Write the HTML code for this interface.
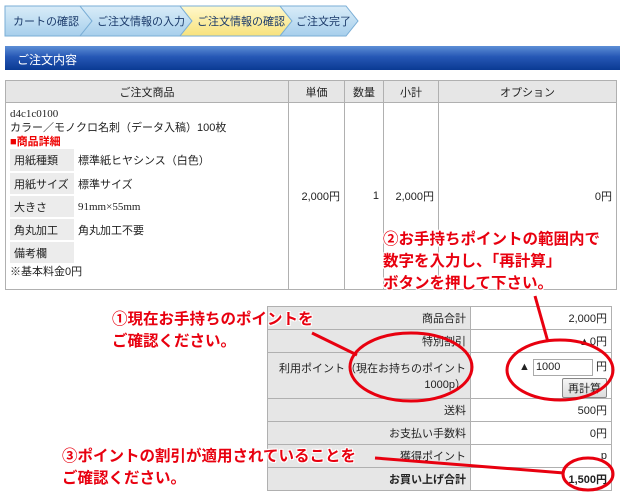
<!DOCTYPE html>
<html><head><meta charset="utf-8"><style>
*{margin:0;padding:0;box-sizing:border-box}
body{width:620px;height:497px;background:#fff;position:relative;overflow:hidden;font-family:"Liberation Sans","Noto Sans CJK JP",sans-serif;font-size:11px;color:#222}
.a{position:absolute}
.bar{left:5px;top:46px;width:615px;height:24px;background:linear-gradient(#5d8fd6,#2657b5 45%,#0a3a93);color:#fff;font-size:12px;padding:5px 0 0 12px}
table{border-collapse:collapse;position:absolute}
td,th{border:1px solid #b0b0b0;font-weight:normal}
.t1 th{background:#e6e6e6;height:22px;font-size:11px}
.det td{border:none;border-bottom:2px solid #fff;height:23px;padding:0 4px;font-size:11px}
.det td.l{background:#ececec;width:64px}
.t2 td{height:23px;padding:0 4px;text-align:right;font-size:11px}
.t2 td.l{background:#e6e6e6;width:203px}
.ann{position:absolute;color:#e8000f;font-weight:bold;font-size:15.5px;line-height:22px;text-shadow:0 0 2px #fff,0 0 2px #fff,1px 1px 0 #fff,-1px -1px 0 #fff,1px -1px 0 #fff,-1px 1px 0 #fff;white-space:nowrap}
.serif{font-family:"Liberation Serif",serif}
</style></head><body>
<svg class="a" style="left:0;top:0" width="420" height="40">
<defs><linearGradient id="gb" x1="0" y1="0" x2="0" y2="1"><stop offset="0" stop-color="#d9ecf8"/><stop offset="1" stop-color="#a7cfec"/></linearGradient>
<linearGradient id="gy" x1="0" y1="0" x2="0" y2="1"><stop offset="0" stop-color="#fff8cc"/><stop offset="1" stop-color="#f7e27c"/></linearGradient></defs>
<polygon points="5,6 80,6 92,21 80,36 5,36" fill="url(#gb)" stroke="#7aaed6"/>
<polygon points="80,6 180,6 192,21 180,36 80,36 92,21" fill="url(#gb)" stroke="#7aaed6"/>
<polygon points="180,6 280,6 292,21 280,36 180,36 192,21" fill="url(#gy)" stroke="#7aaed6"/>
<polygon points="280,6 346,6 358,21 346,36 280,36 292,21" fill="url(#gb)" stroke="#7aaed6"/>
<g font-size="11" fill="#1b3a6a" font-family="Liberation Sans,Noto Sans CJK JP,sans-serif">
<text x="13" y="25">カートの確認</text><text x="97" y="25">ご注文情報の入力</text><text x="197" y="25">ご注文情報の確認</text><text x="296" y="25">ご注文完了</text></g>
</svg>
<div class="a bar">ご注文内容</div>
<table class="t1" style="left:5px;top:80px;width:612px;height:210px">
<tr><th style="width:283px">ご注文商品</th><th style="width:56px">単価</th><th style="width:39px">数量</th><th style="width:55px">小計</th><th>オプション</th></tr>
<tr><td style="vertical-align:top;padding:4px 4px 3px">
<div class="serif" style="line-height:14px">d4c1c0100</div>
<div style="line-height:14px">カラー／モノクロ名刺（データ入稿）100枚</div>
<div style="color:#e00;font-weight:bold;line-height:14px">■商品詳細</div>
<table class="det" style="position:static;width:100%"><tr><td class="l">用紙種類</td><td>標準紙ヒヤシンス（白色）</td></tr>
<tr><td class="l">用紙サイズ</td><td>標準サイズ</td></tr><tr><td class="l">大きさ</td><td class="serif">91mm×55mm</td></tr>
<tr><td class="l">角丸加工</td><td>角丸加工不要</td></tr><tr><td class="l">備考欄</td><td></td></tr></table>
<div style="line-height:14px">※基本料金0円</div></td>
<td style="text-align:right;padding-right:4px">2,000円</td><td style="text-align:right;padding-right:4px">1</td><td style="text-align:right;padding-right:4px">2,000円</td><td style="text-align:right;padding-right:4px">0円</td></tr>
</table>
<table class="t2" style="left:267px;top:306px;width:345px">
<tr><td class="l">商品合計</td><td>2,000円</td></tr>
<tr><td class="l">特別割引</td><td>▲0円</td></tr>
<tr><td class="l" style="height:45px;vertical-align:top;padding-top:8px;line-height:16px">利用ポイント（現在お持ちのポイント<br>1000p）</td><td style="height:45px;vertical-align:top;padding-top:5px">▲ <span style="display:inline-block;width:60px;height:17px;border:1px solid #aaa;text-align:left;padding-left:2px;line-height:15px">1000</span> 円<br><span style="display:inline-block;margin-top:2px;border:1px solid #888;border-radius:2px;background:linear-gradient(#f6f6f6,#dcdcdc);padding:1px 5px">再計算</span></td></tr>
<tr><td class="l">送料</td><td>500円</td></tr>
<tr><td class="l">お支払い手数料</td><td>0円</td></tr>
<tr><td class="l">獲得ポイント</td><td>p</td></tr>
<tr><td class="l" style="font-weight:bold">お買い上げ合計</td><td style="font-weight:bold">1,500円</td></tr>
</table>
<svg class="a" style="left:0;top:0" width="620" height="497" fill="none" stroke="#e8000f" stroke-width="3">
<ellipse cx="411" cy="367" rx="61" ry="34"/>
<ellipse cx="560" cy="370" rx="53" ry="30"/>
<ellipse cx="588" cy="474" rx="25" ry="16"/>
<line x1="312" y1="333" x2="357" y2="355"/>
<line x1="535" y1="296" x2="548" y2="342"/>
<line x1="375" y1="458" x2="564" y2="473"/>
</svg>
<div class="ann" style="left:383px;top:229px">②お手持ちポイントの範囲内で<br>数字を入力し、「再計算」<br>ボタンを押して下さい。</div>
<div class="ann" style="left:112px;top:309px">①現在お手持ちのポイントを<br>ご確認ください。</div>
<div class="ann" style="left:62px;top:446px">③ポイントの割引が適用されていることを<br>ご確認ください。</div>
</body></html>
